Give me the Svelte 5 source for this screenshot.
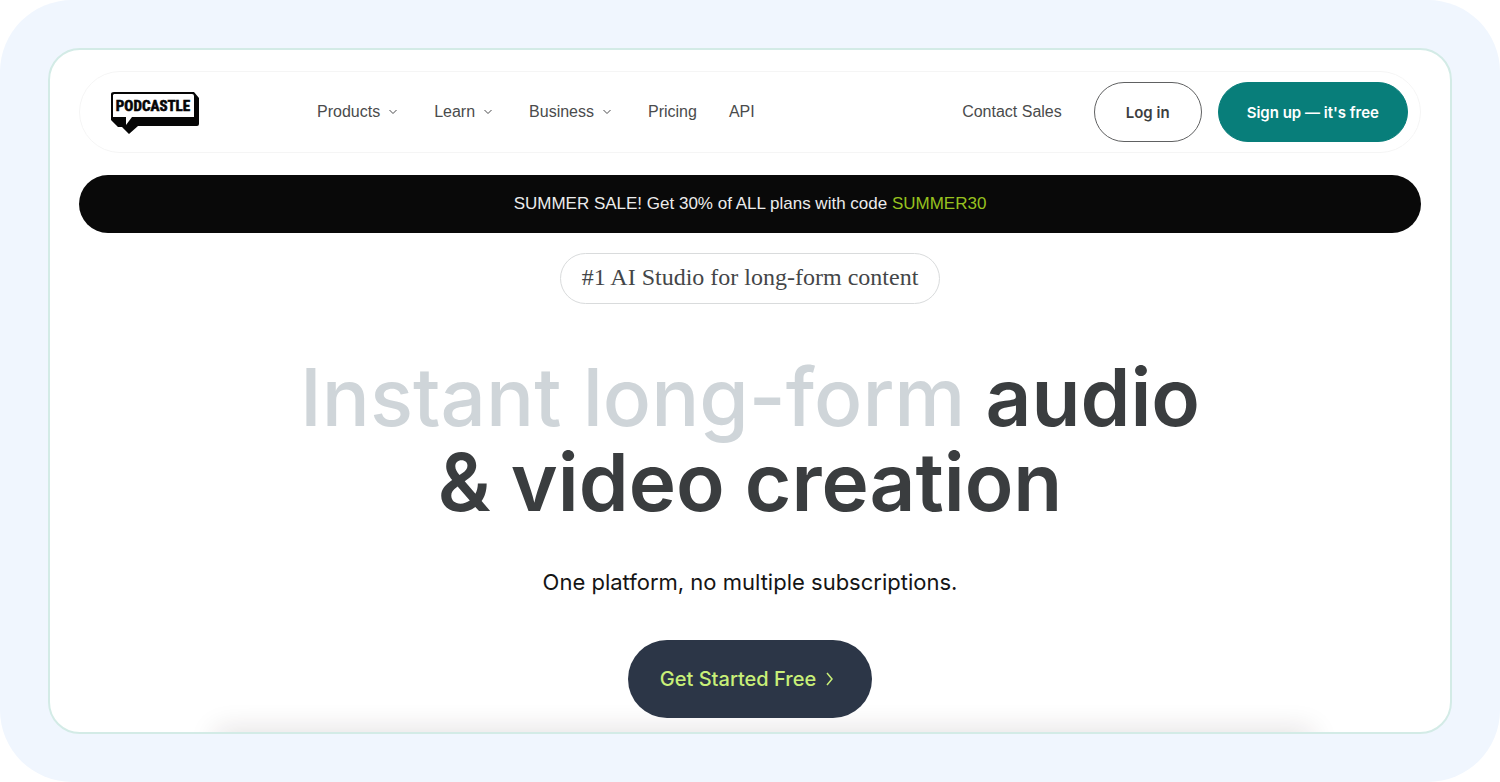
<script>
	const menu = [
		{ label: 'Products', dropdown: true },
		{ label: 'Learn', dropdown: true },
		{ label: 'Business', dropdown: true },
		{ label: 'Pricing', dropdown: false },
		{ label: 'API', dropdown: false }
	];
</script>

<div class="stage">
	<div class="panel">
		<header class="navbar">
			<a class="logo" href="#home" aria-label="Podcastle">
				<svg width="90" height="46" viewBox="0 0 90 46">
					<path d="M4 3H84L89 9V35Q89 37 87 37H28L19 45L12 38H8L1 31V5Q1 3 4 3Z" fill="#060606" />
					<path d="M4 5H82Q84 5 84 7V28H22L16 36V28H3V6Z" fill="#fff" />
					<text x="43" y="22" text-anchor="middle">PODCASTLE</text>
				</svg>
			</a>

			<nav class="menu">
				{#each menu as item}
					{#if item.dropdown}
						<button class="menu-item" type="button">
							{item.label}
							<svg width="8" height="6" viewBox="0 0 8 6">
								<path d="M0.5 1L4 4.5L7.5 1" fill="none" stroke="currentColor" />
							</svg>
						</button>
					{:else}
						<a class="menu-item" href="#{item.label.toLowerCase()}">{item.label}</a>
					{/if}
				{/each}
			</nav>

			<div class="actions">
				<a class="menu-item" href="#sales">Contact Sales</a>
				<div class="buttons">
					<button class="btn btn-outline" type="button">Log in</button>
					<button class="btn btn-solid" type="button">Sign up — it's free</button>
				</div>
			</div>
		</header>

		<p class="banner">
			SUMMER SALE! Get 30% of ALL plans with code <span class="code">SUMMER30</span>
		</p>

		<main class="hero">
			<p class="badge">#1 AI Studio for long-form content</p>
			<h1><span class="faded">Instant long-form</span> audio<br />&amp; video creation</h1>
			<p class="tagline">One platform, no multiple subscriptions.</p>
			<button class="cta" type="button">
				Get Started Free
				<svg width="8" height="14" viewBox="0 0 8 14">
					<path d="M1 1L6 7L1 13" fill="none" stroke="currentColor" stroke-width="1.5" />
				</svg>
			</button>
		</main>
	</div>
</div>

<style>
	:global(*) {
		box-sizing: border-box;
		margin: 0;
	}

	:global(body) {
		background: #fff;
		font-family: 'Liberation Sans', Arial, sans-serif;
		color: #3a3d40;
	}

	.stage {
		padding: 48px;
		background: #f0f6fe;
		border-radius: 72px;
	}

	.panel {
		position: relative;
		overflow: hidden;
		padding: 21px 29px 14px;
		background: #fff;
		border: 2px solid #d3ebe6;
		border-radius: 32px;
	}

	/* soft shade rising from the bottom edge */
	.panel::after {
		content: '';
		position: absolute;
		left: 12%;
		right: 10%;
		bottom: -20px;
		height: 20px;
		box-shadow: 0 0 28px 2px rgba(40, 20, 25, 0.14);
	}

	.navbar {
		display: flex;
		align-items: center;
		padding: 10px 12px 10px 30px;
		border: 1px solid #f5f5f5;
		border-radius: 41px;
	}

	.logo {
		display: flex;
		margin-right: 117px;
	}

	.logo text {
		font-family: 'Liberation Sans Narrow', 'Roboto Condensed', 'Liberation Sans', sans-serif;
		font-size: 15px;
		font-weight: 700;
		fill: #060606;
		stroke: #060606;
		stroke-width: 0.6;
	}

	.menu,
	.actions {
		display: flex;
		align-items: center;
		gap: 32px;
	}

	.menu-item {
		display: flex;
		align-items: center;
		gap: 9px;
		padding: 0;
		border: 0;
		background: none;
		color: #4a4b4c;
		font: inherit;
		font-size: 16px;
		line-height: 24px;
		text-decoration: none;
	}

	button.menu-item {
		padding-right: 5px;
	}

	.actions {
		margin-left: auto;
	}

	.buttons {
		display: flex;
		gap: 16px;
	}

	.btn {
		height: 60px;
		padding: 0 31px;
		border: 1px solid #606162;
		border-radius: 30px;
		background: #fff;
		color: #3d3e3f;
		font-family: Inter, sans-serif;
		font-size: 15px;
		font-weight: 600;
	}

	.btn-solid {
		padding: 0 28px;
		border-color: #087e7a;
		background: #087e7a;
		color: #fff;
	}

	.banner {
		margin-top: 22px;
		padding: 17px 24px;
		border-radius: 29px;
		background: #090909;
		color: #ececec;
		font-size: 17px;
		line-height: 24px;
		text-align: center;
	}

	.code {
		color: #97c11f;
	}

	.hero {
		display: flex;
		flex-direction: column;
		align-items: center;
		text-align: center;
	}

	.badge {
		margin-top: 20px;
		padding: 8px 21px 11px;
		border: 1px solid #d9dbdc;
		border-radius: 26px;
		color: #444648;
		font-family: 'Liberation Serif', serif;
		font-size: 24px;
		line-height: 30px;
	}

	h1 {
		margin-top: 50px;
		color: #3a3d3f;
		font-family: Inter, sans-serif;
		font-size: 80px;
		font-weight: 600;
		line-height: 85px;
	}

	.faded {
		color: #cfd5d9;
		font-weight: 500;
	}

	.tagline {
		margin-top: 42px;
		color: #151515;
		font-family: Inter, sans-serif;
		font-size: 22px;
		line-height: 32px;
	}

	.cta {
		position: relative;
		z-index: 1;
		display: flex;
		align-items: center;
		gap: 10px;
		height: 78px;
		margin-top: 42px;
		padding: 0 38px 0 32px;
		border: 0;
		border-radius: 39px;
		background: #2c3647;
		color: #c9f078;
		font-family: Inter, sans-serif;
		font-size: 20px;
		font-weight: 500;
	}
</style>
